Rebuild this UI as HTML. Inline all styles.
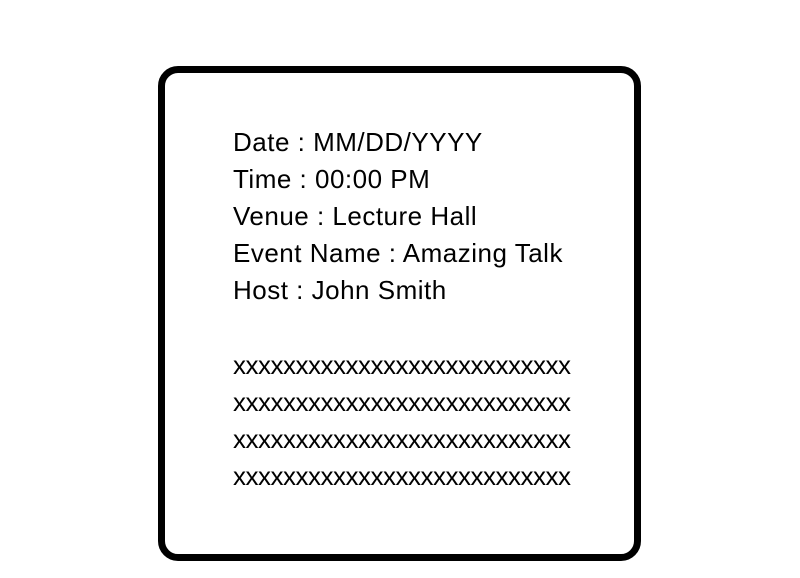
<!DOCTYPE html>
<html><head><meta charset="utf-8"><style>
html,body{margin:0;padding:0;background:#fff;width:800px;height:578px;overflow:hidden}
.box{position:absolute;left:158px;top:66px;width:469px;height:481px;border:7px solid #000;border-radius:20px;}
.t{position:absolute;left:233px;font-family:"Liberation Sans",Arial,sans-serif;font-size:26px;color:#000;line-height:37px;white-space:nowrap}
.l{letter-spacing:0.5px}
.x{letter-spacing:-0.5px}
</style></head><body>
<div class="box"></div>
<div class="t l" style="top:124px">Date : MM/DD/YYYY<br>Time : 00:00 PM<br>Venue : Lecture Hall<br>Event Name : Amazing Talk<br>Host : John Smith</div>
<div class="t x" style="top:347px">xxxxxxxxxxxxxxxxxxxxxxxxxxx<br>xxxxxxxxxxxxxxxxxxxxxxxxxxx<br>xxxxxxxxxxxxxxxxxxxxxxxxxxx<br>xxxxxxxxxxxxxxxxxxxxxxxxxxx</div>
</body></html>
